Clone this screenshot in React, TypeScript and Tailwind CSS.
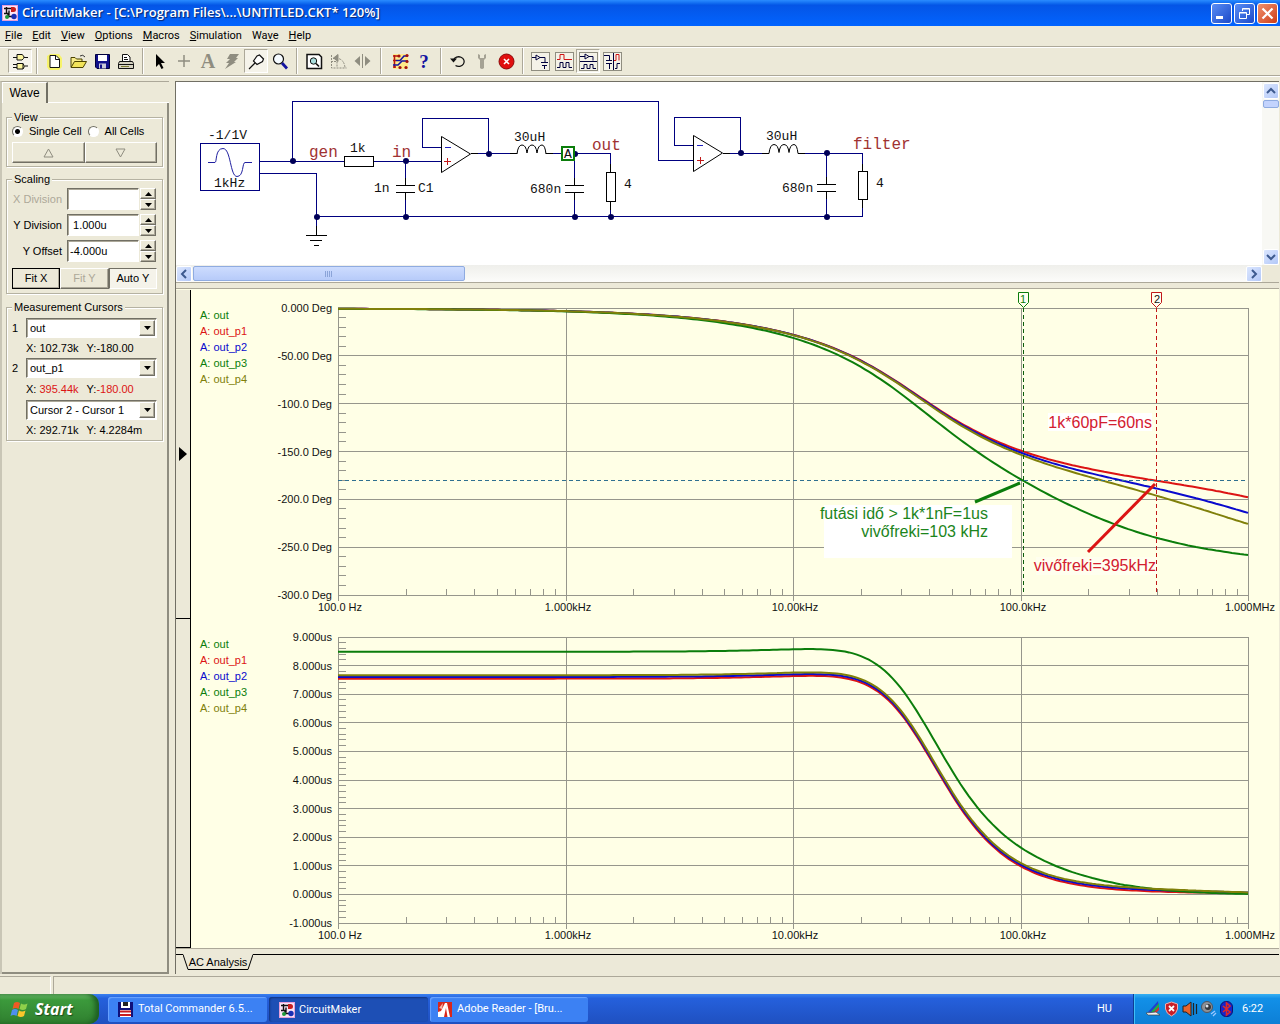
import { useState, type ReactNode } from 'react';

const GREEN = '#0b7d0b';
const RED = '#dc1414';
const BLUE = '#0a0acd';
const OLIVE = '#80800a';
const NAVY = '#000080';
const GRID = '#96968c';

const MENUS = [
  ['', 'F', 'ile'],
  ['', 'E', 'dit'],
  ['', 'V', 'iew'],
  ['', 'O', 'ptions'],
  ['', 'M', 'acros'],
  ['', 'S', 'imulation'],
  ['Wa', 'v', 'e'],
  ['', 'H', 'elp'],
];

const SIGNALS = [
  { name: 'out', color: 'text-[#0b7d0b]' },
  { name: 'out_p1', color: 'text-[#dc1414]' },
  { name: 'out_p2', color: 'text-[#0a0acd]' },
  { name: 'out_p3', color: 'text-[#0b7d0b]' },
  { name: 'out_p4', color: 'text-[#80800a]' },
];

// ─── Filter maths ─────────────────────────────────────────────────
// 30uH / 680nF / 4 ohm output filter behind an RC delay of tau seconds
const L = 30e-6;
const C = 680e-9;
const R = 4;

const TRACES = [
  { color: RED, tau: 60e-9 },
  { color: BLUE, tau: 120e-9 },
  { color: GREEN, tau: 1e-6 },
  { color: OLIVE, tau: 180e-9 },
];

function phaseDeg(f: number, tau: number) {
  const w = 2 * Math.PI * f;
  const rad = Math.atan2((w * L) / R, 1 - w * w * L * C) + Math.atan(w * tau);
  return (-rad * 180) / Math.PI;
}

function groupDelayUs(f: number, tau: number) {
  const w = 2 * Math.PI * f;
  const a = L / R;
  const b = L * C * w * w;
  const gd = (a * (1 + b)) / ((1 - b) ** 2 + (a * w) ** 2) + tau / (1 + (w * tau) ** 2);
  return gd * 1e6;
}

// ─── Plot ─────────────────────────────────────────────────────────
const PLOT_X = 63;
const PLOT_W = 910;
const PLOT_Y = 18;
const X_LABELS = ['100.0 Hz', '1.000kHz', '10.00kHz', '100.0kHz', '1.000MHz'];

interface PlotProps {
  label: string;
  height: number;
  max: number;
  min: number;
  step: number;
  minor: number;
  format: (v: number) => string;
  fn: (f: number, tau: number) => number;
  children?: ReactNode;
}

function Plot({ label, height, max, min, step, minor, format, fn, children }: PlotProps) {
  const toX = (f: number) => PLOT_X + (Math.log10(f / 100) / 4) * PLOT_W;
  const toY = (v: number) => PLOT_Y + ((max - v) / (max - min)) * height;
  const snap = (n: number) => Math.floor(n) + 0.5;
  const bottom = snap(PLOT_Y + height);
  const right = snap(PLOT_X + PLOT_W);

  const majors = Array.from({ length: Math.round((max - min) / step) + 1 }, (_, i) => max - i * step);
  const minors = Array.from({ length: Math.round((max - min) / minor) }, (_, i) => max - i * minor);
  const logTicks = [100, 1e3, 1e4, 1e5].flatMap(d => [2, 3, 4, 5, 6, 7, 8, 9].map(n => d * n));

  const trace = (tau: number) =>
    Array.from({ length: 229 }, (_, i) => {
      const f = 100 * 10 ** ((i / 228) * 4);
      return `${toX(f).toFixed(1)},${(toY(fn(f, tau)) + 0.5).toFixed(1)}`;
    }).join(' ');

  return (
    <svg viewBox="0 0 1003 329" className="block h-auto w-full min-w-0 flex-1" role="img" aria-label={label}>
      <g stroke={GRID} strokeWidth="1" shapeRendering="crispEdges">
        {majors.map(v => (
          <line key={v} x1={PLOT_X} x2={right} y1={snap(toY(v))} y2={snap(toY(v))} />
        ))}
        {minors.map(v => (
          <line key={v} x1={PLOT_X} x2={PLOT_X + 8} y1={snap(toY(v))} y2={snap(toY(v))} />
        ))}
        {X_LABELS.map((t, i) => {
          const x = snap(toX(100 * 10 ** i) + 0.5);
          return <line key={t} x1={x} x2={x} y1={PLOT_Y} y2={bottom + 5} />;
        })}
        {logTicks.map(f => (
          <line key={f} x1={snap(toX(f))} x2={snap(toX(f))} y1={bottom - 7} y2={bottom} />
        ))}
      </g>
      <g fontFamily="Liberation Sans, Arial, sans-serif" fontSize="11" fill="#111">
        {majors.map(v => (
          <text key={v} x={PLOT_X - 6} y={Math.round(toY(v)) + 4} textAnchor="end">{format(v)}</text>
        ))}
        {X_LABELS.map((t, i) => (
          <text key={t} x={Math.round(toX(100 * 10 ** i)) + 2} y={Math.round(bottom) + 15} textAnchor="middle">{t}</text>
        ))}
      </g>
      {TRACES.map(t => (
        <polyline key={t.color} points={trace(t.tau)} fill="none" stroke={t.color} strokeWidth="2" />
      ))}
      {children}
    </svg>
  );
}

function PhaseOverlay() {
  return (
    <g>
      <rect x="549" y="215" width="188" height="53" fill="#fff" />
      <rect x="773" y="123" width="104" height="18" fill="#fff" />
      <rect x="761" y="267" width="121" height="18" fill="#ffffef" />
      <g fill="none" strokeWidth="1" shapeRendering="crispEdges">
        <line x1="63" x2="973" y1="190.5" y2="190.5" stroke="#2f7090" strokeDasharray="4 3" />
        <line x1="748.5" x2="748.5" y1="18" y2="305" stroke="#0b5d0b" strokeDasharray="4 3" />
        <line x1="881.5" x2="881.5" y1="18" y2="305" stroke="#c01818" strokeDasharray="4 3" />
      </g>
      <path d="M743.5 2.5h10v10l-5 5l-5-5z" fill="#fffff0" stroke={GREEN} />
      <path d="M876.5 2.5h10v10l-5 5l-5-5z" fill="#fffff0" stroke="#c01818" />
      <line x1="700" y1="212" x2="745" y2="193" stroke={GREEN} strokeWidth="3" />
      <line x1="813" y1="262" x2="880" y2="194" stroke={RED} strokeWidth="3" />
      <g fontFamily="Liberation Sans, Arial, sans-serif">
        <g fontSize="11" textAnchor="middle">
          <text x="748" y="13" fill={GREEN}>1</text>
          <text x="882" y="13" fill="#111">2</text>
        </g>
        <g fontSize="16" textAnchor="end" fill="#1c851c">
          <text x="713" y="229">futási idő &gt; 1k*1nF=1us</text>
          <text x="713" y="247">vivőfreki=103 kHz</text>
        </g>
        <g fontSize="16" textAnchor="end" fill="#d3202f">
          <text x="877" y="138">1k*60pF=60ns</text>
          <text x="881" y="281">vivőfreki=395kHz</text>
        </g>
      </g>
    </g>
  );
}

function Legend() {
  return (
    <ul className="w-[84px] shrink-0 pl-[9px] pt-[17px] text-[11px] leading-[16px]">
      {SIGNALS.map(s => (
        <li key={s.name} className={s.color}>A: {s.name}</li>
      ))}
    </ul>
  );
}

function WaveCell({ active, children }: { active?: boolean; children: ReactNode }) {
  return (
    <div className="flex">
      <div className="flex w-[15px] shrink-0 items-center justify-center border-b border-r border-black bg-[#ece9d8]">
        {active && (
          <svg width="8" height="14" viewBox="0 0 8 14"><path d="M0 0L8 7L0 14z" /></svg>
        )}
      </div>
      <Legend />
      {children}
    </div>
  );
}

// ─── Schematic ────────────────────────────────────────────────────
const NODES = [
  [293, 161], [406, 161], [489, 154], [575, 154], [741, 153], [827, 153],
  [317, 217], [406, 217], [575, 217], [611, 217], [827, 217],
];

function Schematic() {
  return (
    <svg width="1085" height="183" viewBox="176 82 1085 183" className="block" role="img" aria-label="Circuit schematic">
      <g fill="none" stroke={NAVY} strokeWidth="1" shapeRendering="crispEdges">
        <rect x="200.5" y="143.5" width="59" height="47" />
        <path d="M260 161.5H344M292.5 161V101.5H658.5V160.5H693" />
        <path d="M260 173.5H316.5V226M316.5 216.5H862.5V199" />
        <path d="M374 161.5H441M405.5 161V180M405.5 198V216" />
        <path d="M441 147.5H422.5V118.5H488.5V154" />
        <path d="M478 153.5H510M553 153.5H610.5V166M610.5 208V216" />
        <path d="M574.5 153V180M574.5 198V216" />
        <path d="M693 145.5H674.5V117.5H740.5V153" />
        <path d="M730 153.5H762M805 153.5H862.5V166" />
        <path d="M826.5 153V179M826.5 197V216" />
        <path d="M445 147.5h6M697 145.5h6" stroke="#2020c0" />
        <path d="M444 161.5h7M447.5 158v7M697 160.5h7M700.5 157v7" stroke="#c01818" />
      </g>
      <path d="M208 162.5h7c2 0 0-14 8-14s7 28 14 28s5-14 8-14h7" fill="none" stroke="#2020a0" />
      <g fill="none" stroke="#000" strokeWidth="1" shapeRendering="crispEdges">
        <rect x="344.5" y="156.5" width="29" height="10" fill="#fff" />
        <rect x="606.5" y="172.5" width="9" height="29" fill="#fff" />
        <rect x="858.5" y="171.5" width="9" height="28" fill="#fff" />
        <path d="M316.5 226V235M306 235.5h21M310 240.5h12M314 245.5h5" />
        <path d="M405.5 178V185M396 185.5h19M396 192.5h19M405.5 193V200" />
        <path d="M574.5 178V185M565 185.5h19M565 192.5h19M574.5 193V200" />
        <path d="M826.5 177V184M817 184.5h19M817 191.5h19M826.5 192V199" />
        <path d="M610.5 164V172M610.5 202V210M862.5 164V171M862.5 200V208" />
        <path d="M471 153.5h7M510 153.5h7M546 153.5h7M723 153.5h7M762 153.5h7M798 153.5h7" />
      </g>
      <g fill="none" stroke="#000">
        <path d="M441.5 136.5v36l29-18.5z" />
        <path d="M693.5 135.5v36l29-18.5z" />
        <path d="M517 154q1-9 5-9q4 0 5 8q1-8 5-8q4 0 5 8q1-8 5-8q3 0 4 9" />
        <path d="M769 153.500q1-9 5-9q4 0 5 8q1-8 5-8q4 0 5 8q1-8 5-8q3 0 4 9" />
      </g>
      {NODES.map(([x, y]) => (
        <circle key={`${x}-${y}`} cx={x} cy={y} r="3" fill="#000058" />
      ))}
      <rect x="562" y="147" width="12" height="13" fill="#fff" stroke={GREEN} strokeWidth="2" />
      <g fontFamily="Liberation Mono, Courier New, monospace" fontSize="13" fill="#111">
        <text x="208" y="139">-1/1V</text>
        <text x="214" y="187">1kHz</text>
        <text x="350" y="152">1k</text>
        <text x="374" y="192">1n</text>
        <text x="418" y="192">C1</text>
        <text x="514" y="141">30uH</text>
        <text x="564" y="158">A</text>
        <text x="530" y="193">680n</text>
        <text x="624" y="188">4</text>
        <text x="766" y="140">30uH</text>
        <text x="782" y="192">680n</text>
        <text x="876" y="187">4</text>
      </g>
      <g fontFamily="Liberation Mono, Courier New, monospace" fontSize="16" fill="#a03232">
        <text x="309" y="157">gen</text>
        <text x="392" y="157">in</text>
        <text x="592" y="150">out</text>
        <text x="853" y="149">filter</text>
      </g>
    </svg>
  );
}

// ─── Icons ────────────────────────────────────────────────────────
function AppIcon() {
  return (
    <svg width="16" height="16" viewBox="0 0 16 16" aria-hidden="true">
      <rect width="16" height="16" fill="#fbe4f6" />
      <rect x="0.5" y="0.5" width="15" height="15" fill="none" stroke="#e59fd8" />
      <path d="M2 3.500h8M4.500 2v6M2 8.500h4v3h4M7 5.500v5" fill="none" stroke="#111" strokeWidth="1.400" />
      <path d="M9 2h2.500a2.500 2.500 0 010 5H9z" fill="#c81e1e" />
      <circle cx="5" cy="12" r="2" fill="#1f9a3c" />
      <circle cx="12" cy="11.500" r="2.700" fill="#1a2fb4" />
    </svg>
  );
}

const ICONS: Record<string, ReactNode> = {
  gates: <><path d="M5 1.500h5q4 2.500 0 5.500H5zM5 10.500h6v5.500H5zM11 10.500q3 3 0 5.500" fill="#fdf7a0" stroke="#111" /><path d="M1 4.500h4M12 4.500h4M1 11.500h4M1 14.500h4M13 13h3" stroke="#111" fill="none" /></>,
  new: <><path d="M1 3l3-2h9l3 4v9l-3 3H3l-2-3z" fill="#f7f36a" /><path d="M4 2.500h6l3.500 3.500v8.500H4z" fill="#fff" stroke="#111" /><path d="M9.500 2.500v4h4" fill="none" stroke="#111" /></>,
  open: <><path d="M1 14V4.500h4l1.500 1.500H12v2.500" fill="#f7ec8a" stroke="#4b4300" /><path d="M1 14.500l3.500-6h12l-3.500 6z" fill="#f2e45a" stroke="#4b4300" /><path d="M10 3q3-2 5 1" fill="none" stroke="#333" /></>,
  save: <><path d="M1.500 1.500h14v14h-12.500l-1.500-1.500z" fill="#10108a" stroke="#00003c" /><rect x="4" y="2" width="9" height="6" fill="#fff" /><rect x="5" y="10.500" width="7" height="5" fill="#c9c9d8" /><rect x="6" y="11.500" width="2" height="4" fill="#10108a" /></>,
  print: <><path d="M4.500 8V1.500h5l2.500 2.500v4" fill="#fff" stroke="#111" /><path d="M6 4.500h3M6 6.500h4" stroke="#111" /><path d="M1.500 8.500h13l1 2v5h-15v-5z" fill="#d6d3c2" stroke="#111" /><path d="M1 11.500h14" stroke="#111" /><path d="M3 13.500h8" stroke="#7a7a30" /></>,
  arrow: <path d="M4 1v13l3-3l2.500 5l2-1l-2.500-5h4z" fill="#000" />,
  plus: <path d="M8 2v12M2 8h12" stroke="#8f8d80" strokeWidth="1.500" />,
  text: <text x="8" y="15" textAnchor="middle" fontFamily="Liberation Serif, serif" fontSize="20" fontWeight="bold" fill="#8f8d80">A</text>,
  bolt: <path d="M6 1h9l-3 4h2l-4 4h2L1 16l4-6H2l4-4H3z" fill="#8f8d80" />,
  probe: <path d="M1 16l6-6M5.500 8l3.500 3.500l5.500-3l1-2.500l-4-4l-2.500 1z" fill="#fff" stroke="#111" strokeWidth="1.200" />,
  zoom: <><circle cx="6.500" cy="6" r="5" fill="#f5fbff" stroke="#111" strokeWidth="1.200" /><path d="M10 10l5 5.500" stroke="#1414a0" strokeWidth="2.800" /></>,
  fit: <><path d="M1 1.500h12l2.500 2.500v11.500H1z" fill="#fff" stroke="#111" strokeWidth="1.500" /><circle cx="7.500" cy="8" r="3.200" fill="#a9dede" stroke="#111" /><path d="M10 10.500l3 3" stroke="#111" strokeWidth="1.700" /></>,
  rotate: <g stroke="#8f8d80" fill="none"><path d="M1.500 2v13h15M3 5.500h5q6 1 7 9M1 8.500h6v6" strokeDasharray="2 1" /><path d="M3.500 5L8 1.500v7z" fill="#8f8d80" /></g>,
  mirror: <><path d="M6 3v10L0.500 8zM11 3v10L16.500 8z" fill="#8f8d80" /><path d="M8.500 1v14" stroke="#8f8d80" /></>,
  wires: <><rect x="1" y="1" width="15" height="15" fill="#ffe98a" /><path d="M2.500 2v13M1 3h5M1 7.500h3M1 14h3" stroke="#b41414" strokeWidth="1.500" /><path d="M4 7.500h4l4-4.500h4M1 12h5l4-4h6" fill="none" stroke="#1414a0" strokeWidth="1.500" /><g fill="#a01010"><circle cx="7" cy="3" r="1.600" /><circle cx="15" cy="2.500" r="1.600" /><circle cx="15" cy="8.500" r="1.600" /><circle cx="14" cy="14.500" r="1.600" /><circle cx="8" cy="14.500" r="1.600" /></g></>,
  help: <text x="8" y="15" textAnchor="middle" fontFamily="Liberation Serif, serif" fontSize="19" fontWeight="bold" fill="#1414a0">?</text>,
  undo: <><path d="M3.500 7a5.500 4.800 0 112 5.500" fill="none" stroke="#111" strokeWidth="1.300" /><path d="M0 5.500h7l-3.500 4z" fill="#111" /></>,
  wrench: <path d="M4 1v4l2 2v8q2 2 4 0V7l2-2V1l-2 1v3H6V2z" fill="#a5a294" />,
  stop: <><circle cx="8.500" cy="8.500" r="7.500" fill="#e00f0f" stroke="#8c0a0a" /><path d="M6 6l5 5M11 6l-5 5" stroke="#fff" strokeWidth="1.600" /></>,
};

function Icon({ name }: { name: string }) {
  return <svg width="17" height="17" viewBox="0 0 17 17" className="overflow-visible" aria-hidden="true">{ICONS[name]}</svg>;
}

const VIEW_ICONS = [
  { id: 'Schematic only', shapes: <path d="M1 5.500h4M9 5.500h5v5M10 10.500h7M11 13.500h5M13.500 13v4M5 3v5l4-2.500z" stroke="#00003c" /> },
  { id: 'Waves only', shapes: <><path d="M2 7.500h3v-5h4v5h8" stroke="#d01414" /><path d="M2 15.500h3v-5h3v5h3v-5h3v5h3" stroke="#00003c" /></> },
  { id: 'Split horizontally', shapes: <><path d="M1 4.500h5M10 4.500h4v4M6 2v5l4-2.500zM1 9.500h17" stroke="#00003c" /><path d="M2 16.500h3v-4h3v4h3v-4h3v4h3" stroke="#00003c" /></> },
  { id: 'Split vertically', shapes: <><path d="M1 3.500h5.500v5M3 8.500h6M3 11.500h6M6.500 12v5M10.500 1v17" stroke="#00003c" /><path d="M11 8.500h2v-6h3v6" stroke="#d01414" /><path d="M12 16.500h2v-5h3" stroke="#00003c" /></> },
];

function ToolButton({ label, pressed, children }: { label: string; pressed?: boolean; children: ReactNode }) {
  return (
    <button
      type="button"
      aria-label={label}
      aria-pressed={pressed}
      className={`flex size-6 shrink-0 items-center justify-center ${
        pressed ? 'border border-b-white border-l-[#aca899] border-r-white border-t-[#aca899] bg-[#f5f3ea]' : ''
      }`}
    >
      {children}
    </button>
  );
}

function Separator({ wide }: { wide?: boolean }) {
  return <div className={`h-[26px] w-[2px] shrink-0 border-l border-r border-l-[#aca899] border-r-white ${wide ? 'mx-[6px]' : 'mx-1'}`} />;
}

function Toolbar() {
  return (
    <div className="flex h-[30px] items-center border-b border-t border-b-[#aca899] border-t-[#aca899] pl-2 shadow-[inset_0_1px_0_#fff,0_1px_0_#fff]">
      <ToolButton label="Parts" pressed><Icon name="gates" /></ToolButton>
      <Separator />
      {['new', 'open', 'save', 'print'].map(n => <ToolButton key={n} label={n}><Icon name={n} /></ToolButton>)}
      <Separator />
      {['arrow', 'plus', 'text', 'bolt', 'probe', 'zoom'].map(n => (
        <ToolButton key={n} label={n} pressed={n === 'probe'}><Icon name={n} /></ToolButton>
      ))}
      <Separator />
      {['fit', 'rotate', 'mirror'].map(n => <ToolButton key={n} label={n}><Icon name={n} /></ToolButton>)}
      <Separator wide />
      {['wires', 'help'].map(n => <ToolButton key={n} label={n}><Icon name={n} /></ToolButton>)}
      <Separator />
      {['undo', 'wrench', 'stop'].map(n => <ToolButton key={n} label={n}><Icon name={n} /></ToolButton>)}
      <Separator />
      {VIEW_ICONS.map((v, i) => (
        <ToolButton key={v.id} label={v.id} pressed={i === 2}>
          <svg width="19" height="19" viewBox="0 0 19 19" fill="none" aria-hidden="true">
            <rect x="0.5" y="0.5" width="18" height="18" fill="#f4f2e8" stroke="#8f8d80" />
            {v.shapes}
          </svg>
        </ToolButton>
      ))}
    </div>
  );
}

// ─── Side panel ───────────────────────────────────────────────────
const RAISED = 'border border-b-[#716f64] border-l-white border-r-[#716f64] border-t-white shadow-[inset_-1px_-1px_0_#aca899]';
const SUNKEN = 'border border-b-white border-l-[#716f64] border-r-white border-t-[#716f64] shadow-[inset_1px_1px_0_#aca899] bg-white';

function Group({ title, children }: { title: string; children: ReactNode }) {
  return (
    <fieldset className="mx-1 border border-[#b5b2a2] px-[5px] shadow-[1px_1px_0_#fff,inset_1px_1px_0_#fff]">
      <legend className="bg-[#ece9d8] px-[2px] leading-[14px]">{title}</legend>
      {children}
    </fieldset>
  );
}

function Triangle({ up, hollow }: { up?: boolean; hollow?: boolean }) {
  if (hollow) {
    return (
      <svg width="11" height="10" viewBox="0 0 11 10" fill="none" stroke="#8f8d80">
        <path d={up ? 'M5.500 1L10 9H1z' : 'M1 1h9L5.500 9z'} />
      </svg>
    );
  }
  return <svg width="7" height="4" viewBox="0 0 7 4"><path d={up ? 'M3.500 0L7 4H0z' : 'M0 0h7L3.500 4z'} /></svg>;
}

function SpinRow({ id, label, value, disabled }: { id: string; label: string; value: string; disabled?: boolean }) {
  const [text, setText] = useState(value);
  return (
    <div className="flex h-[22px] items-center">
      <label htmlFor={id} className={`w-[50px] whitespace-nowrap text-right ${disabled ? 'text-[#aca899]' : ''}`}>{label}</label>
      <input
        id={id}
        value={text}
        disabled={disabled}
        onChange={e => setText(e.target.value)}
        className={`ml-[5px] h-[22px] w-[72px] pl-[2px] ${SUNKEN}`}
      />
      <div className="ml-[1px] flex flex-col">
        <button type="button" aria-label={`${label} up`} className={`flex h-[11px] w-4 items-center justify-center ${RAISED}`}><Triangle up /></button>
        <button type="button" aria-label={`${label} down`} className={`flex h-[11px] w-4 items-center justify-center ${RAISED}`}><Triangle /></button>
      </div>
    </div>
  );
}

function Combo({ label, value, options }: { label: string; value: string; options: string[] }) {
  return (
    <div className="relative ml-[14px] h-5">
      <select aria-label={label} defaultValue={value} className={`h-5 w-[131px] appearance-none pl-[3px] ${SUNKEN}`}>
        {options.map(o => <option key={o}>{o}</option>)}
      </select>
      <span className={`pointer-events-none absolute left-[113px] top-[2px] flex h-4 w-4 items-center justify-center bg-[#ece9d8] ${RAISED}`}>
        <Triangle />
      </span>
    </div>
  );
}

function SidePanel() {
  const names = SIGNALS.map(s => s.name);
  return (
    <aside className="flex w-[169px] shrink-0 flex-col border-l-2 border-t border-l-[#c9c6b6] border-t-[#aca899]">
      <div className="flex h-[21px]">
        <button type="button" className="w-[46px] border-l border-r-2 border-t border-l-white border-r-[#716f64] border-t-white text-center text-[12px]">Wave</button>
        <div className="flex-1 border-b border-white" />
      </div>
      <div className="flex flex-1 flex-col border-b-2 border-r-2 border-[#8f8d80] pt-[7px]">
        <Group title="View">
          <div className="flex h-[14px] items-center gap-[6px]">
            {['Single Cell', 'All Cells'].map((o, i) => (
              <label key={o} className="flex items-center gap-[6px] whitespace-nowrap">
                <input
                  type="radio"
                  name="cells"
                  defaultChecked={i === 0}
                  className="size-[11px] appearance-none rounded-full border border-b-white border-l-[#716f64] border-r-white border-t-[#716f64] bg-white checked:bg-[radial-gradient(circle,#000_2px,#fff_3px)]"
                />
                {o}
              </label>
            ))}
          </div>
          <div className="mb-[3px] mt-[4px] flex h-[21px]">
            <button type="button" aria-label="Previous cell" className={`flex flex-1 items-center justify-center ${RAISED}`}><Triangle up hollow /></button>
            <button type="button" aria-label="Next cell" className={`flex flex-1 items-center justify-center ${RAISED}`}><Triangle hollow /></button>
          </div>
        </Group>
        <div className="h-[5px]" />
        <Group title="Scaling">
          <div className="mt-[2px] flex flex-col gap-1">
            <SpinRow id="xdiv" label="X Division" value="" disabled />
            <SpinRow id="ydiv" label="Y Division" value=" 1.000u" />
            <SpinRow id="yoff" label="Y Offset" value="-4.000u" />
          </div>
          <div className="mb-1 mt-[6px] flex h-[21px]">
            <button type="button" className={`flex-1 outline outline-1 -outline-offset-1 outline-black ${RAISED}`}>Fit X</button>
            <button type="button" disabled className={`flex-1 text-[#aca899] ${RAISED}`}>Fit Y</button>
            <button type="button" aria-pressed className="flex-1 border border-b-white border-l-[#716f64] border-r-white border-t-[#716f64] bg-[#f5f3ea]">Auto Y</button>
          </div>
        </Group>
        <div className="h-[6px]" />
        <Group title="Measurement Cursors">
          <div className="mt-[4px] flex items-center">
            <span className="-mr-[7px] w-[7px]">1</span>
            <Combo label="Cursor 1" value="out" options={names} />
          </div>
          <p className="ml-[14px] flex h-5 items-center gap-2">X: 102.73k <span>Y:-180.00</span></p>
          <div className="flex items-center">
            <span className="-mr-[7px] w-[7px]">2</span>
            <Combo label="Cursor 2" value="out_p1" options={names} />
          </div>
          <p className="ml-[14px] flex h-[22px] items-center gap-2">
            <span>X: <span className="text-[#dc1414]">395.44k</span></span>
            <span>Y:<span className="text-[#dc1414]">-180.00</span></span>
          </p>
          <Combo label="Difference" value="Cursor 2 - Cursor 1" options={['Cursor 2 - Cursor 1', 'Cursor 1 - Cursor 2']} />
          <p className="ml-[14px] flex h-5 items-center gap-2">X: 292.71k <span>Y: 4.2284m</span></p>
        </Group>
      </div>
    </aside>
  );
}

// ─── Scroll bars ──────────────────────────────────────────────────
function ScrollButton({ label, d }: { label: string; d: string }) {
  return (
    <button type="button" aria-label={label} className="flex size-4 shrink-0 items-center justify-center rounded-[2px] border border-white bg-gradient-to-br from-[#dbe6fe] to-[#b3c8f8]">
      <svg width="10" height="10" viewBox="0 0 10 10" fill="none" stroke="#3d5a8f" strokeWidth="2"><path d={d} /></svg>
    </button>
  );
}

// ─── Taskbar ──────────────────────────────────────────────────────
function Taskbar() {
  return (
    <footer className="flex h-[30px] items-stretch bg-gradient-to-b from-[#3a80f0] via-[#2560dc] via-15% to-[#1f50c0] font-['Roboto',sans-serif] text-[11px] text-white">
      <button type="button" className="flex w-[99px] items-center gap-[7px] rounded-r-[10px] bg-gradient-to-b from-[#6fc06f] via-[#3c9a3c] via-20% to-[#2f7f2f] pl-[10px] shadow-[inset_-4px_0_5px_#1e5e22]">
        <svg width="18" height="18" viewBox="0 0 18 18" aria-hidden="true">
          <path d="M4 3q3-2 6 0L8.500 9q-3-2-6 0z" fill="#ee5a24" />
          <path d="M11 3.500q3 2 6.500 0L16 9q-3 2-6.500 0z" fill="#8fd14a" />
          <path d="M2 10q3-2 6 0L6.500 16q-3-2-6 0z" fill="#4f8ff0" />
          <path d="M9 10.500q3 2 6.500 0L14 16q-3 2-6.500 0z" fill="#fbc62c" />
        </svg>
        <span className="font-['Open_Sans',sans-serif] text-[16px] font-bold italic [text-shadow:1px_1px_1px_#1b4d1b]">Start</span>
      </button>
      <div className="flex flex-1 items-center gap-[2px] pl-[9px] pt-[1px]">
        <button type="button" className="flex h-[25px] w-[159px] items-center gap-[5px] rounded-[3px] bg-[#3c81f3] pl-[10px] shadow-[inset_1px_1px_1px_#6ba3ff]">
          <svg width="15" height="15" viewBox="0 0 15 15" aria-hidden="true">
            <rect width="15" height="15" fill="#10107a" />
            <rect x="3" width="9" height="6" fill="#fff" /><rect x="5" width="5" height="4" fill="#222" />
            <rect x="2" y="8" width="11" height="7" fill="#fff" /><path d="M2 9.500h11M2 13h11" stroke="#c81e1e" strokeWidth="2" />
          </svg>
          Total Commander 6.5...
        </button>
        <button type="button" className="flex h-[25px] w-[159px] items-center gap-[4px] rounded-[3px] bg-[#1d4fb5] pl-[10px] pt-[1px] shadow-[inset_1px_1px_2px_#123480]">
          <AppIcon />
          CircuitMaker
        </button>
        <button type="button" className="flex h-[25px] w-[158px] items-center gap-[5px] rounded-[3px] bg-[#3c81f3] pl-[8px] shadow-[inset_1px_1px_1px_#6ba3ff]">
          <svg width="14" height="15" viewBox="0 0 14 15" aria-hidden="true">
            <rect width="14" height="15" fill="#d8271c" />
            <path d="M0 15V10l3-1l4-8h2L6 15zM9 1l3 14H9.500L8 6z" fill="#fff" />
            <path d="M5 1l-4 5l3 1z" fill="#f6b8ac" />
          </svg>
          Adobe Reader - [Bru...
        </button>
      </div>
      <span className="flex items-center pr-[21px]">HU</span>
      <div className="flex w-[147px] items-center gap-[3px] border-l border-[#0e3d94] bg-gradient-to-b from-[#35b0f2] via-[#1290e8] via-15% to-[#0d7fd6] pl-[11px] shadow-[inset_1px_0_0_#3fc0f8]">
        <svg width="16" height="16" viewBox="0 0 16 16" aria-hidden="true">
          <path d="M3 11L13 0l1 8-4 5z" fill="#2040d0" /><path d="M6 11l8-9v4l-5 5z" fill="#20b040" /><path d="M9 11l5-5v3l-3 3z" fill="#d83030" />
          <path d="M1 12l10-1 4 3H3z" fill="#f4f4f4" stroke="#444" strokeWidth="0.700" />
        </svg>
        <svg width="15" height="16" viewBox="0 0 15 16" aria-hidden="true">
          <path d="M7.500 1l6 2v5q-1 5-6 7q-5-2-6-7V3z" fill="#c81e28" stroke="#f0b0b0" /><path d="M5 5l5 5M10 5l-5 5" stroke="#fff" strokeWidth="1.800" />
        </svg>
        <svg width="16" height="16" viewBox="0 0 16 16" aria-hidden="true">
          <path d="M1 5h3l5-4v14l-5-4H1z" fill="#e8642c" stroke="#222" /><path d="M11.500 2v12M14.500 3v10" stroke="#222" strokeWidth="1.200" />
        </svg>
        <svg width="16" height="16" viewBox="0 0 16 16" aria-hidden="true">
          <circle cx="6" cy="6" r="5.500" fill="#8d9096" stroke="#50545c" /><circle cx="7" cy="6" r="3" fill="#33373c" /><circle cx="6" cy="5" r="1.500" fill="#e0e4ea" />
          <path d="M10 13l4-3M12 15l3-3" stroke="#9cc8ff" strokeWidth="1.300" />
        </svg>
        <svg width="13" height="16" viewBox="0 0 13 16" aria-hidden="true">
          <rect x="0.500" y="0.500" width="12" height="15" rx="5.500" fill="#1a24c8" stroke="#0c1270" /><path d="M3 5l7 6-3.500 3V2L10 5l-7 6" fill="none" stroke="#e02828" strokeWidth="1.600" />
        </svg>
        <span className="ml-[6px]">6:22</span>
      </div>
    </footer>
  );
}

export default function App() {
  return (
    <div className="flex min-h-screen flex-col bg-[#ece9d8] font-['Liberation_Sans',Arial,sans-serif] text-[11px] text-black">
      <header className="flex h-[26px] items-center bg-gradient-to-b from-[#2a8cff] via-[#0455e6] via-20% to-[#0264ff] pl-[2px] pr-[2px]">
        <AppIcon />
        <h1 className="flex-1 pl-1 font-['Open_Sans',sans-serif] text-[13px] font-semibold text-white [text-shadow:1px_1px_1px_#0a246a]">
          CircuitMaker - [C:\Program Files\...\UNTITLED.CKT* 120%]
        </h1>
        <div className="flex gap-[2px]">
          <button type="button" aria-label="Minimize" className="size-[21px] rounded-[3px] border border-white bg-gradient-to-br from-[#5a8df5] to-[#1d48c8]">
            <svg width="19" height="19" viewBox="0 0 19 19"><path d="M4 13.500h7" stroke="#fff" strokeWidth="3" /></svg>
          </button>
          <button type="button" aria-label="Restore" className="size-[21px] rounded-[3px] border border-white bg-gradient-to-br from-[#5a8df5] to-[#1d48c8]">
            <svg width="19" height="19" viewBox="0 0 19 19" fill="none" stroke="#fff"><path d="M7.500 7V4.500h7v6H12M4.500 8.500h7v6h-7zM4.500 9h7M7.500 5h7" /></svg>
          </button>
          <button type="button" aria-label="Close" className="size-[21px] rounded-[3px] border border-white bg-gradient-to-br from-[#f0906c] to-[#cc3a10]">
            <svg width="19" height="19" viewBox="0 0 19 19"><path d="M4.500 4.500l10 10M14.500 4.500l-10 10" stroke="#fff" strokeWidth="2.200" /></svg>
          </button>
        </div>
      </header>

      <nav className="flex h-5 items-center gap-[10px] pl-[5px] font-['Roboto',sans-serif]">
        {MENUS.map(([pre, key, post]) => (
          <button key={pre + key + post} type="button">{pre}<u>{key}</u>{post}</button>
        ))}
      </nav>

      <Toolbar />

      <div className="flex flex-1 pb-[2px] pt-[5px]">
        <SidePanel />
        <main className="ml-[6px] mr-[1px] flex min-w-0 flex-1 flex-col border-l border-t border-[#716f64]">
          {/* ─── Schematic pane ─────────────────────────────── */}
          <div className="flex bg-white">
            <div className="min-w-0 flex-1 overflow-hidden"><Schematic /></div>
            <div className="flex w-[17px] shrink-0 flex-col items-center bg-[#f8f8f4] pt-[1px]">
              <ScrollButton label="Scroll up" d="M1 7l4-4l4 4" />
              <div className="mt-[1px] h-2 w-4 rounded-[2px] border border-[#8fabe0] bg-[#c3d3fd]" />
              <div className="flex-1" />
              <ScrollButton label="Scroll down" d="M1 3l4 4l4-4" />
            </div>
          </div>
          <div className="flex border-b border-[#aca899] pr-[17px]">
            <div className="flex h-[17px] flex-1 items-center bg-gradient-to-b from-[#efefeb] to-[#fcfcfa]">
              <ScrollButton label="Scroll left" d="M7 1l-4 4l4 4" />
              <div className="ml-[1px] flex h-[15px] w-1/4 items-center justify-center gap-[1px] rounded-[2px] border border-[#8fabe0] bg-gradient-to-b from-[#cddcfe] to-[#b7cbf9]">
                {[0, 1, 2, 3].map(i => <span key={i} className="h-[6px] w-[1px] bg-[#8ba4d8]" />)}
              </div>
              <div className="flex-1" />
              <ScrollButton label="Scroll right" d="M3 1l4 4l-4 4" />
            </div>
          </div>

          {/* ─── Wave pane ──────────────────────────────────── */}
          <div className="mt-[5px] border-b border-t border-[#aca899] bg-[#ffffe6] pr-[1px] pt-[1px]">
            <WaveCell active>
              <Plot
                label="Phase"
                height={287}
                max={0}
                min={-300}
                step={50}
                minor={10}
                format={v => (v === 0 ? '0.000 Deg' : `${v.toPrecision(4)} Deg`)}
                fn={phaseDeg}
              >
                <PhaseOverlay />
              </Plot>
            </WaveCell>
            <WaveCell>
              <Plot
                label="Group delay"
                height={286}
                max={9}
                min={-1}
                step={1}
                minor={0.2}
                format={v => `${v.toFixed(3)}us`}
                fn={groupDelayUs}
              />
            </WaveCell>
          </div>

          <div className="mt-[5px] flex h-[19px]">
            <div className="w-[7px] border-t border-black" />
            <button type="button" className="relative h-[17px] w-[70px] text-center leading-[17px]">
              <svg width="70" height="17" viewBox="0 0 70 17" fill="none" stroke="#000" className="absolute inset-0" aria-hidden="true">
                <path d="M0 0.500l5 15h60l5-15" />
              </svg>
              AC Analysis
            </button>
            <div className="flex-1 border-t border-black" />
          </div>
        </main>
      </div>

      <div className="flex h-[18px] gap-[2px]">
        <div className="w-[51px] border-r border-t border-r-white border-t-[#aca899]" />
        <div className="flex-1 border-l border-t border-[#aca899]" />
      </div>
      <Taskbar />
    </div>
  );
}
